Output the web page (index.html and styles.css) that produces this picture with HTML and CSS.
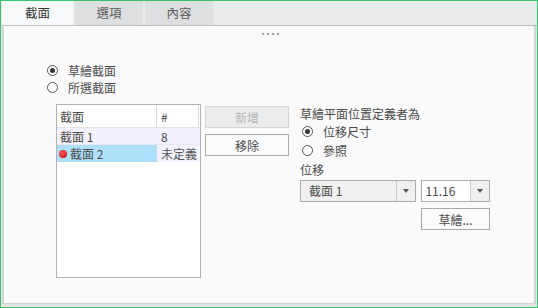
FILE: index.html
```html
<!DOCTYPE html>
<html lang="zh-Hant">
<head>
    <meta charset="UTF-8">
    <title>截面</title>
    <link rel="stylesheet" href="styles.css">
</head>
<body>
    <div class="window">
        <div class="tabbar">
            <div class="tab active">截面</div>
            <div class="tab">選項</div>
            <div class="tab">內容</div>
        </div>
        <div class="panel">
            <div class="grip"><span></span><span></span><span></span><span></span></div>
            <div class="content">
                <div class="mode">
                    <label class="radio"><span class="dot checked"></span>草繪截面</label>
                    <label class="radio"><span class="dot"></span>所選截面</label>
                </div>
                <div class="columns">
                    <div class="table">
                        <div class="row head">
                            <div class="cell name">截面</div>
                            <div class="cell num">#</div>
                        </div>
                        <div class="row first">
                            <div class="cell name">截面 1</div>
                            <div class="cell num">8</div>
                        </div>
                        <div class="row selected">
                            <div class="cell name"><span class="err"></span>截面 2</div>
                            <div class="cell num">未定義</div>
                        </div>
                    </div>
                    <div class="actions">
                        <button class="btn" disabled>新增</button>
                        <button class="btn">移除</button>
                    </div>
                    <div class="placement">
                        <div class="caption">草繪平面位置定義者為</div>
                        <label class="radio"><span class="dot checked"></span>位移尺寸</label>
                        <label class="radio"><span class="dot"></span>參照</label>
                        <div class="caption small">位移</div>
                        <div class="combos">
                            <div class="combo wide"><span class="value">截面 1</span><span class="arrow"></span></div>
                            <div class="combo narrow"><span class="value edit">11.16</span><span class="arrow"></span></div>
                        </div>
                        <div class="sketch-row">
                            <button class="btn sketch">草繪...</button>
                        </div>
                    </div>
                </div>
            </div>
        </div>
    </div>
</body>
</html>
```

FILE: styles.css
```css
body {
    margin: 0;
    font-family: "Noto Sans CJK TC", "Noto Sans", sans-serif;
    font-size: 12px;
    color: #4a4a4a;
    background: #fafafa;
}
.window {
    width: 538px;
    height: 308px;
    box-sizing: border-box;
    border: 1px solid #35c46a;
    display: flex;
    flex-direction: column;
    background: #e4e5e6;
}
.tabbar {
    height: 24px;
    display: flex;
    gap: 2px;
    padding-left: 1px;
    background: #e9eaeb;
    border-bottom: 1px solid #b6bfbd;
}
.tab {
    width: 68px;
    line-height: 24px;
    text-align: center;
    background: #dedfe0;
    color: #5a5a5a;
    font-size: 12.5px;
}
.tab.active {
    width: 71px;
    background: #f8f9fa;
    color: #333;
}
.panel {
    flex: 1;
    margin: 0 1px 3px 1px;
    background: #fafafa;
    border-left: 2px solid #d3d5d7;
    border-right: 2px solid #d3d5d7;
    border-bottom: 1px solid #cfd1d3;
}
.grip {
    display: flex;
    justify-content: center;
    gap: 3px;
    padding-top: 7px;
    padding-left: 2px;
}
.grip span {
    width: 2px;
    height: 2px;
    background: #a0a0a0;
}
.content {
    padding: 27px 0 0 43px;
}
.radio {
    display: flex;
    align-items: center;
    gap: 10px;
    height: 17px;
    line-height: 17px;
}
.dot {
    width: 9px;
    height: 9px;
    border: 1px solid #555;
    border-radius: 50%;
    display: flex;
    align-items: center;
    justify-content: center;
    background: #fff;
}
.dot.checked::after {
    content: "";
    width: 5px;
    height: 5px;
    border-radius: 50%;
    background: #333;
}
.columns {
    display: flex;
    align-items: flex-start;
    margin-top: 8px;
    margin-left: 9px;
}
.table {
    width: 143px;
    height: 172px;
    border: 1px solid #b3b3b3;
    background: #fff;
}
.row {
    display: flex;
    height: 17px;
    line-height: 17px;
}
.row.head {
    height: 22px;
    line-height: 23px;
    border-bottom: 1px solid #e2e2e2;
}
.row.head .cell.name {
    border-right: 1px solid #d8d8d8;
}
.row.head .cell.num {
    border-right: 1px solid #d8d8d8;
}
.row.first {
    height: 16px;
    background: #f3f1fb;
    border-bottom: 1px solid #e8e6ef;
}
.cell {
    overflow: hidden;
    white-space: nowrap;
    box-sizing: border-box;
}
.cell.name {
    width: 100px;
    padding-left: 3px;
}
.cell.num {
    width: 42px;
    padding-left: 4px;
}
.row.selected .cell.name {
    background: #afe0f9;
    display: flex;
    align-items: center;
    gap: 3px;
    padding-left: 2px;
}
.row.selected .cell.num {
    background: #f3f1fb;
    color: #555;
}
.err {
    width: 8px;
    height: 8px;
    border-radius: 50%;
    background: radial-gradient(circle at 35% 35%, #ff5a5a, #d40000);
}
.actions {
    display: flex;
    flex-direction: column;
    gap: 6px;
    margin-left: 4px;
    margin-top: 2px;
}
.btn {
    width: 84px;
    height: 22px;
    padding: 0;
    font-family: inherit;
    font-size: 12px;
    color: #4a4a4a;
    background: #fbfbfb;
    border: 1px solid #a9a9a9;
}
.btn:disabled {
    color: #b5b5b5;
    background: #ececec;
    border-color: #d6d6d6;
}
.placement {
    margin-left: 11px;
    margin-top: 1px;
    display: flex;
    flex-direction: column;
    width: 190px;
}
.caption {
    height: 17px;
    line-height: 17px;
}
.placement .radio {
    height: 19px;
    line-height: 19px;
    padding-left: 2px;
}
.placement .caption.small {
    margin-top: 1px;
}
.combos {
    display: flex;
    gap: 5px;
    margin-top: 2px;
}
.combo {
    height: 22px;
    box-sizing: border-box;
    border: 1px solid #acacac;
    display: flex;
    background: #f0f0f0;
}
.combo.wide {
    width: 117px;
}
.combo.narrow {
    width: 69px;
}
.value {
    flex: 1;
    line-height: 20px;
    padding-left: 8px;
}
.value.edit {
    background: #fff;
    padding-left: 3px;
    border-right: 1px solid #c8c8c8;
}
.arrow {
    width: 18px;
    border-left: 1px solid #c8c8c8;
    display: flex;
    align-items: center;
    justify-content: center;
}
.combo.narrow .arrow {
    border-left: none;
}
.arrow::after {
    content: "";
    border-left: 3px solid transparent;
    border-right: 3px solid transparent;
    border-top: 4px solid #555;
}
.sketch-row {
    display: flex;
    margin-top: 6px;
    padding-left: 121px;
}
.btn.sketch {
    width: 69px;
}
```
